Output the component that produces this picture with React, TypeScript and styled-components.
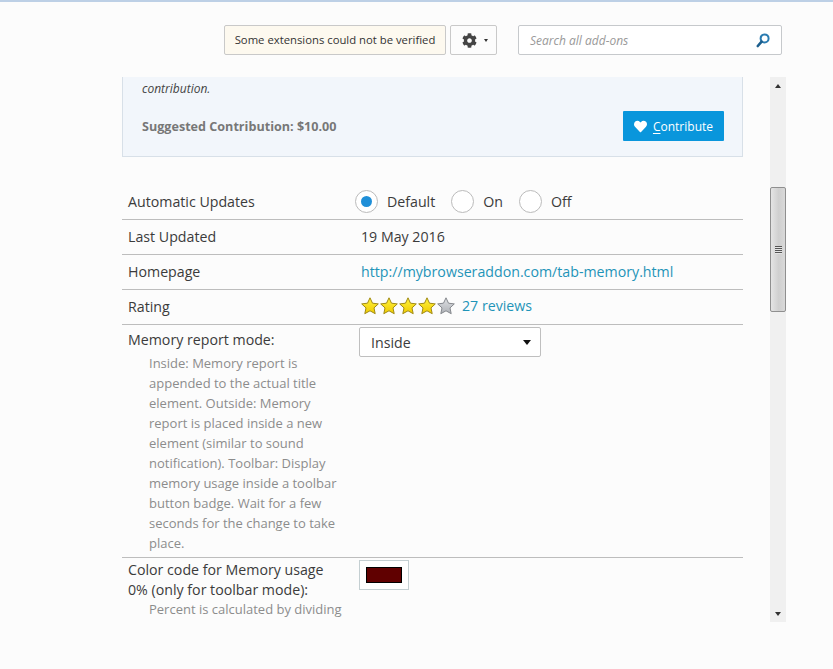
import { createGlobalStyle } from 'styled-components';
import styled from 'styled-components';
import { FaCog, FaHeart } from 'react-icons/fa';

const GlobalStyle = createGlobalStyle`
  html, body {
    margin: 0;
    padding: 0;
    background: #fcfcfc;
  }
  * {
    box-sizing: border-box;
  }
  body {
    font-family: 'Open Sans', 'Noto Sans', sans-serif;
    color: #3b3b3b;
    overflow: hidden;
  }
`;

const Page = styled.div`
  display: flex;
  flex-direction: column;
  width: 833px;
  height: 669px;
  border-top: 2px solid #bdd0e6;
`;

const Header = styled.header`
  display: flex;
  align-items: stretch;
  height: 30px;
  margin: 23px 0 22px 224px;
`;

const Notice = styled.div`
  display: flex;
  align-items: center;
  justify-content: center;
  width: 222px;
  padding-bottom: 1px;
  background: #fdf9ef;
  border: 1px solid #c9c9c9;
  border-radius: 2px;
  font-size: 11.3px;
  color: #333;
`;

const GearButton = styled.button`
  display: flex;
  align-items: center;
  gap: 7px;
  width: 47px;
  margin-left: 4px;
  padding: 0 0 0 11px;
  background: #fcfcfc;
  border: 1px solid #c9c9c9;
  border-radius: 2px;
  color: #444;
`;

const SmallCaret = styled.span`
  width: 0;
  height: 0;
  border-left: 2.5px solid transparent;
  border-right: 2.5px solid transparent;
  border-top: 3px solid #333;
`;

const SearchBox = styled.div`
  display: flex;
  align-items: center;
  justify-content: space-between;
  width: 264px;
  margin-left: 21px;
  padding: 0 11px 0 11px;
  background: #fff;
  border: 1px solid #c6c9cc;
  border-radius: 2px;
  font-size: 12px;
  font-style: italic;
  color: #999;
`;

const Main = styled.main`
  display: flex;
  justify-content: space-between;
  width: 664px;
  height: 545px;
  margin-left: 122px;
`;

const ScrollPane = styled.div`
  width: 621px;
  height: 100%;
  overflow: hidden;
`;

const ContributionBox = styled.section`
  height: 98px;
  margin-top: -18px;
  padding: 0 18px 0 19px;
  background: #f2f6fb;
  border: 1px solid #d8e0e8;
  border-top: 0;
  font-size: 12px;
  color: #444;
`;

const ContributionText = styled.p`
  margin: 0;
  font-style: italic;
  line-height: 20px;
`;

const ContributionRow = styled.div`
  display: flex;
  align-items: center;
  justify-content: space-between;
  margin-top: 12px;
`;

const Suggested = styled.strong`
  color: #777;
  font-size: 12.6px;
`;

const ContributeButton = styled.button`
  display: flex;
  align-items: center;
  justify-content: center;
  gap: 6px;
  width: 101px;
  height: 30px;
  padding: 0;
  background: #0996dc;
  border: 0;
  border-radius: 1px;
  font: inherit;
  font-size: 12px;
  color: #fff;

  u {
    text-underline-offset: 2px;
  }
`;

const Details = styled.div`
  margin-top: 28px;
`;

const Row = styled.div`
  display: grid;
  grid-template-columns: 225px 1fr;
  min-height: 35px;
  padding-left: 6px;
  border-bottom: 1px solid #bdbdbd;
  font-size: 14.2px;

  &:last-child {
    border-bottom: 0;
  }
`;

const Label = styled.div<{ $top?: number; $bottom?: number }>`
  width: 215px;
  margin-bottom: ${(props) => props.$bottom ?? 0}px;
  padding-top: ${(props) => props.$top ?? 7}px;
  line-height: 20px;
`;

const Description = styled.div`
  width: 198px;
  margin: 0 0 4px 21px;
  font-size: 13px;
  line-height: 20px;
  color: #8c8c8c;
`;

const Value = styled.div`
  display: flex;
  align-items: center;
  height: 32px;
  padding-left: 8px;
`;

const RadioGroup = styled.div`
  display: flex;
  align-items: center;
  height: 32px;
  margin-left: 2px;
`;

const Radio = styled.span<{ $checked?: boolean }>`
  display: flex;
  align-items: center;
  justify-content: center;
  width: 23px;
  height: 23px;
  margin-right: 9px;
  background: #fff;
  border: 1px solid #bbb;
  border-radius: 50%;

  &::after {
    content: '';
    display: ${(props) => (props.$checked ? 'block' : 'none')};
    width: 11px;
    height: 11px;
    background: #1f8fd8;
    border-radius: 50%;
  }
`;

const RadioLabel = styled.span`
  margin-right: 16px;
`;

const Link = styled.a`
  color: #1f94b8;
  text-decoration: none;
`;

const RatingValue = styled.div`
  display: flex;
  align-items: center;
  padding-bottom: 1px;
`;

const Stars = styled.span`
  display: flex;
  gap: 1px;
  margin-right: 7px;
`;

const SelectBox = styled.div`
  display: flex;
  align-items: center;
  justify-content: space-between;
  width: 182px;
  height: 30px;
  margin: 2px 0 0 6px;
  padding: 0 9px 0 11px;
  background: #fff;
  border: 1px solid #bfbfbf;
  border-radius: 2px;
`;

const SelectCaret = styled.span`
  width: 0;
  height: 0;
  border-left: 4.5px solid transparent;
  border-right: 4.5px solid transparent;
  border-top: 5px solid #111;
`;

const Swatch = styled.div`
  display: flex;
  align-items: center;
  justify-content: center;
  width: 50px;
  height: 30px;
  margin: 2px 0 0 6px;
  background: #fff;
  border: 1px solid #c4cfd2;
`;

const SwatchColor = styled.span<{ $color: string }>`
  width: 36px;
  height: 16px;
  background: ${(props) => props.$color};
  border: 1px solid #000;
`;

const Scrollbar = styled.div`
  display: flex;
  flex-direction: column;
  width: 16px;
  height: 100%;
  background: #f0f0f0;
`;

const ScrollButton = styled.div`
  display: flex;
  align-items: center;
  justify-content: center;
  height: 17px;
`;

const ScrollArrow = styled.span<{ $down?: boolean }>`
  width: 0;
  height: 0;
  border-left: 3.5px solid transparent;
  border-right: 3.5px solid transparent;
  ${(props) =>
    props.$down ? 'border-top: 4px solid #333;' : 'border-bottom: 4px solid #333;'}
`;

const ScrollTrack = styled.div`
  flex: 1;
  padding-top: 93px;
`;

const ScrollThumb = styled.div`
  display: flex;
  align-items: center;
  justify-content: center;
  height: 125px;
  background: linear-gradient(to right, #e4e4e4, #cfcfcf 55%, #d9d9d9);
  border: 1px solid #8f8f8f;
  border-radius: 2px;
`;

const Grip = styled.span`
  width: 7px;
  height: 8px;
  background: repeating-linear-gradient(to bottom, #555 0 1px, #e4e4e4 1px 2px);
`;

const SearchIcon = () => (
  <svg width='14' height='15' viewBox='0 0 14 15' fill='none'>
    <circle cx='8.6' cy='5.4' r='4' stroke='#2a7bb0' strokeWidth='2' />
    <path d='M5.6 8.6 1.8 13' stroke='#1c5f8e' strokeWidth='2.6' strokeLinecap='round' />
  </svg>
);

const STAR_PATH =
  'M9 .8l2.5 5.4 5.8.7-4.3 4 1.2 5.8L9 13.8l-5.2 2.9L5 10.9.7 6.9l5.8-.7z';

const Star = ({ on }: { on: boolean }) => (
  <svg width='18' height='18' viewBox='0 0 18 18'>
    <defs>
      <linearGradient id='starOn' x1='0' y1='0' x2='0' y2='1'>
        <stop offset='0' stopColor='#fff23f' />
        <stop offset='1' stopColor='#efcb00' />
      </linearGradient>
      <linearGradient id='starOff' x1='0' y1='0' x2='0' y2='1'>
        <stop offset='0' stopColor='#dfe1e4' />
        <stop offset='1' stopColor='#aeb1b6' />
      </linearGradient>
    </defs>
    <path
      d={STAR_PATH}
      fill={on ? 'url(#starOn)' : 'url(#starOff)'}
      stroke={on ? '#a08a14' : '#85888d'}
      strokeWidth='1'
      strokeLinejoin='round'
    />
  </svg>
);

const App = () => {
  return (
    <>
      <GlobalStyle />
      <Page>
        <Header>
          <Notice>Some extensions could not be verified</Notice>
          <GearButton>
            <FaCog size={15} />
            <SmallCaret />
          </GearButton>
          <SearchBox>
            Search all add-ons
            <SearchIcon />
          </SearchBox>
        </Header>
        <Main>
          <ScrollPane>
            <ContributionBox>
              <ContributionText>
                The developer of this extension asks that you help support its
                continued development by making a small contribution.
              </ContributionText>
              <ContributionRow>
                <Suggested>Suggested Contribution: $10.00</Suggested>
                <ContributeButton>
                  <FaHeart size={13} />
                  <span>
                    <u>C</u>ontribute
                  </span>
                </ContributeButton>
              </ContributionRow>
            </ContributionBox>
            <Details>
              <Row>
                <Label>Automatic Updates</Label>
                <RadioGroup>
                  <Radio $checked />
                  <RadioLabel>Default</RadioLabel>
                  <Radio />
                  <RadioLabel>On</RadioLabel>
                  <Radio />
                  <RadioLabel>Off</RadioLabel>
                </RadioGroup>
              </Row>
              <Row>
                <Label>Last Updated</Label>
                <Value>19 May 2016</Value>
              </Row>
              <Row>
                <Label>Homepage</Label>
                <Value>
                  <Link>http://mybrowseraddon.com/tab-memory.html</Link>
                </Value>
              </Row>
              <Row>
                <Label>Rating</Label>
                <Value>
                  <RatingValue>
                    <Stars>
                      {[true, true, true, true, false].map((on, i) => (
                        <Star key={i} on={on} />
                      ))}
                    </Stars>
                    <Link>27 reviews</Link>
                  </RatingValue>
                </Value>
              </Row>
              <Row>
                <div>
                  <Label $top={5} $bottom={3}>
                    Memory report mode:
                  </Label>
                  <Description>
                    Inside: Memory report is appended to the actual title
                    element. Outside: Memory report is placed inside a new
                    element (similar to sound notification). Toolbar: Display
                    memory usage inside a toolbar button badge. Wait for a few
                    seconds for the change to take place.
                  </Description>
                </div>
                <div>
                  <SelectBox>
                    Inside
                    <SelectCaret />
                  </SelectBox>
                </div>
              </Row>
              <Row>
                <div>
                  <Label $top={2} $bottom={-1}>
                    Color code for Memory usage 0% (only for toolbar mode):
                  </Label>
                  <Description>Percent is calculated by dividing</Description>
                </div>
                <div>
                  <Swatch>
                    <SwatchColor $color='#600000' />
                  </Swatch>
                </div>
              </Row>
            </Details>
          </ScrollPane>
          <Scrollbar>
            <ScrollButton>
              <ScrollArrow />
            </ScrollButton>
            <ScrollTrack>
              <ScrollThumb>
                <Grip />
              </ScrollThumb>
            </ScrollTrack>
            <ScrollButton>
              <ScrollArrow $down />
            </ScrollButton>
          </Scrollbar>
        </Main>
      </Page>
    </>
  );
};

export default App;
